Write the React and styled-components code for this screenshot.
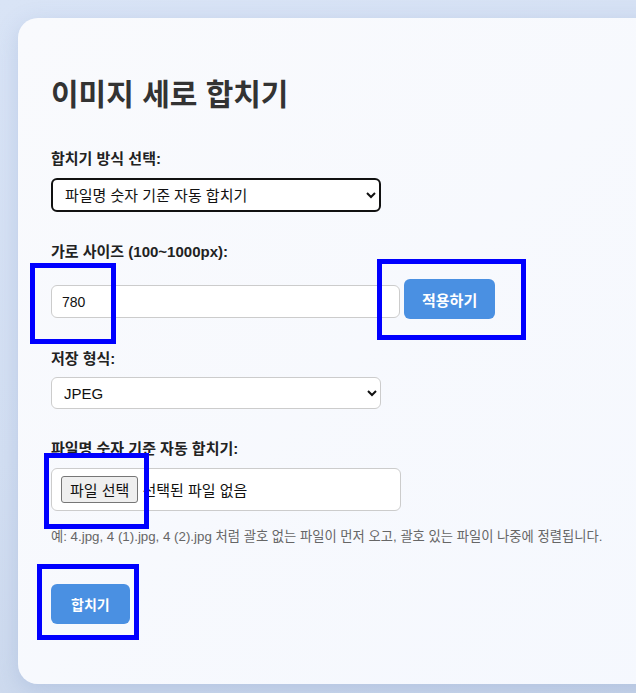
import React, { useState } from 'react';
import styled, { createGlobalStyle } from 'styled-components';

const GlobalStyle = createGlobalStyle`
  html, body {
    margin: 0;
    padding: 0;
    height: 100%;
    overflow: hidden;
  }
  body {
    background: linear-gradient(160deg, #d9e4f6 0%, #d3dff2 50%, #c8d5ea 100%);
    font-family: "Liberation Sans", "Noto Sans CJK KR", sans-serif;
    color: #222;
  }
  * {
    box-sizing: border-box;
  }
`;

const Page = styled.div`
  position: relative;
  min-height: 100vh;
  padding: 18px 0 0 18px;
`;

const Card = styled.div`
  width: 680px;
  padding: 57px 33px 60px;
  border-radius: 20px;
  background: linear-gradient(135deg, #f9fafd 0%, #f5f8fe 100%);
  box-shadow: 0 6px 22px rgba(110, 140, 190, 0.25);
`;

const Title = styled.h1`
  margin: 0 0 34px;
  font-size: 30px;
  line-height: 40px;
  font-weight: bold;
  color: #333;
`;

const Field = styled.div`
  margin-bottom: ${({ last }) => (last ? '0' : '30px')};
`;

const Label = styled.label`
  display: block;
  font-size: 15px;
  line-height: 20px;
  font-weight: bold;
  color: #222;
  margin-bottom: ${({ space }) => space || 9}px;
`;

const Select = styled.select`
  display: block;
  width: 330px;
  height: ${({ focused }) => (focused ? 34 : 32)}px;
  padding: 0 8px;
  font-family: inherit;
  font-size: 15px;
  color: #111;
  background: #fff;
  border: ${({ focused }) => (focused ? '2px solid #111' : '1px solid #ccc')};
  border-radius: 6px;
  outline: none;
`;

const Row = styled.div`
  display: flex;
  align-items: flex-end;
  gap: 4px;
`;

const TextInput = styled.input`
  width: 349px;
  height: 33px;
  margin-bottom: 1px;
  padding: 0 10px;
  font-family: inherit;
  font-size: 14px;
  color: #111;
  background: #fff;
  border: 1px solid #ccc;
  border-radius: 6px;
  outline: none;
`;

const Button = styled.button`
  height: 40px;
  padding: 0 ${({ narrow }) => (narrow ? 20 : 18)}px;
  border: none;
  border-radius: 6px;
  background: #4a90e2;
  color: #fff;
  font-family: inherit;
  font-size: ${({ narrow }) => (narrow ? 14 : 15)}px;
  font-weight: bold;
  cursor: pointer;
`;

const FileBox = styled.label`
  display: flex;
  align-items: center;
  gap: 4px;
  width: 350px;
  height: 43px;
  padding: 0 9px;
  background: #fff;
  border: 1px solid #ccc;
  border-radius: 6px;
  font-size: 15px;
  color: #111;
  cursor: pointer;

  input {
    display: none;
  }
`;

const FileButton = styled.span`
  display: inline-flex;
  align-items: center;
  height: 27px;
  padding: 0 8px;
  background: #efefef;
  border: 1px solid #767676;
  border-radius: 3px;
  font-size: 15px;
  color: #111;
`;

const Hint = styled.p`
  margin: 17px 0 38px;
  font-size: 13.3px;
  line-height: 18px;
  color: #666;
`;

const Marker = styled.div`
  position: absolute;
  border: 5px solid #0000ff;
  pointer-events: none;
`;

const markers = [
  { left: 30, top: 263, width: 86, height: 81 },
  { left: 377, top: 259, width: 149, height: 81 },
  { left: 44, top: 453, width: 105, height: 76 },
  { left: 37, top: 564, width: 102, height: 76 },
];

export default function App() {
  const [mode, setMode] = useState('auto');
  const [width, setWidth] = useState('780');
  const [format, setFormat] = useState('jpeg');
  const [fileName, setFileName] = useState('');

  return (
    <>
      <GlobalStyle />
      <Page>
        <Card>
          <Title>이미지 세로 합치기</Title>

          <Field>
            <Label>합치기 방식 선택:</Label>
            <Select focused value={mode} onChange={(e) => setMode(e.target.value)}>
              <option value="auto">파일명 숫자 기준 자동 합치기</option>
              <option value="manual">직접 순서 지정하여 합치기</option>
            </Select>
          </Field>

          <Field>
            <Label space={17}>가로 사이즈 (100~1000px):</Label>
            <Row>
              <TextInput
                type="number"
                value={width}
                onChange={(e) => setWidth(e.target.value)}
              />
              <Button type="button">적용하기</Button>
            </Row>
          </Field>

          <Field>
            <Label space={8}>저장 형식:</Label>
            <Select value={format} onChange={(e) => setFormat(e.target.value)}>
              <option value="jpeg">JPEG</option>
              <option value="png">PNG</option>
            </Select>
          </Field>

          <Field last>
            <Label>파일명 숫자 기준 자동 합치기:</Label>
            <FileBox>
              <input
                type="file"
                multiple
                onChange={(e) => setFileName(e.target.files.length ? `파일 ${e.target.files.length}개` : '')}
              />
              <FileButton>파일 선택</FileButton>
              <span>{fileName || '선택된 파일 없음'}</span>
            </FileBox>
            <Hint>
              예: 4.jpg, 4 (1).jpg, 4 (2).jpg 처럼 괄호 없는 파일이 먼저 오고, 괄호 있는 파일이 나중에 정렬됩니다.
            </Hint>
          </Field>

          <Button type="button" narrow>합치기</Button>
        </Card>

        {markers.map((m, i) => (
          <Marker key={i} style={m} />
        ))}
      </Page>
    </>
  );
}
